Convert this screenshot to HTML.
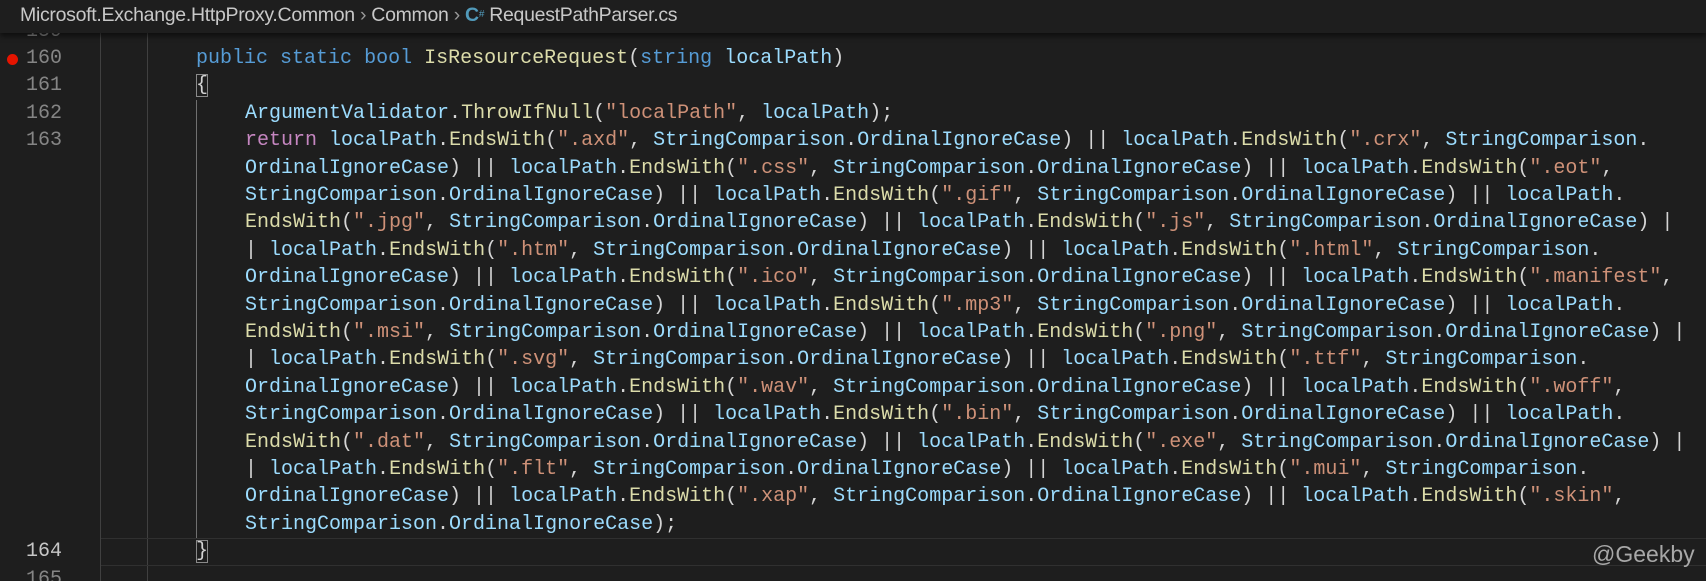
<!DOCTYPE html>
<html><head><meta charset="utf-8"><style>
html,body{margin:0;padding:0;background:#1e1e1e;width:1706px;height:581px;overflow:hidden;position:relative}
.row{position:absolute;left:0;width:1706px;height:27.4px;line-height:27.4px;font-family:"Liberation Mono",monospace;font-size:20px;white-space:pre;color:#d4d4d4}
.ln{position:absolute;left:0;width:62px;text-align:right;color:#858585}
.code{position:absolute}
.v{color:#9cdcfe}.f{color:#dcdcaa}.s{color:#ce9178}.k{color:#569cd6}.r{color:#c586c0}
.g{position:absolute;width:1px;background:#404040}
.bc{position:absolute;left:0;top:0;width:1706px;height:33px;background:#1e1e1e;box-shadow:0 3px 5px rgba(0,0,0,.55);font-family:"Liberation Sans",sans-serif;font-size:19.5px;letter-spacing:-0.3px;color:#c8c8c8;line-height:30px;z-index:5;white-space:pre}
.br{outline:1px solid #8a8a8a;outline-offset:-1px}
</style></head><body>
<div class="g" style="left:100px;top:33px;height:548px"></div>
<div class="g" style="left:147px;top:33px;height:548px"></div>
<div class="g" style="left:196px;top:100px;height:438px;background:#707070"></div>
<div style="position:absolute;left:101px;top:538px;width:1605px;height:26px;border-top:1px solid #303030;border-bottom:1px solid #303030"></div>
<div style="position:absolute;left:7px;top:54px;width:11px;height:11px;border-radius:50%;background:#e51400"></div>

<div class="row" style="top:17.6px"><span class="ln">159</span></div>
<div class="row" style="top:45px"><span class="ln">160</span><span class="code" style="left:196px"><span class="k">public</span> <span class="k">static</span> <span class="k">bool</span> <span class="f">IsResourceRequest</span>(<span class="k">string</span> <span class="v">localPath</span>)</span></div>
<div class="row" style="top:72.4px"><span class="ln">161</span><span class="code" style="left:196px"><span class="br">{</span></span></div>
<div class="row" style="top:99.8px"><span class="ln">162</span><span class="code" style="left:245px"><span class="v">ArgumentValidator</span>.<span class="f">ThrowIfNull</span>(<span class="s">"localPath"</span>, <span class="v">localPath</span>);</span></div>
<div class="row" style="top:127.2px"><span class="ln">163</span><span class="code" style="left:245px"><span class="r">return</span> <span class="v">localPath</span>.<span class="f">EndsWith</span>(<span class="s">".axd"</span>, <span class="v">StringComparison</span>.<span class="v">OrdinalIgnoreCase</span>) || <span class="v">localPath</span>.<span class="f">EndsWith</span>(<span class="s">".crx"</span>, <span class="v">StringComparison</span>.</span></div>
<div class="row" style="top:154.6px"><span class="code" style="left:245px"><span class="v">OrdinalIgnoreCase</span>) || <span class="v">localPath</span>.<span class="f">EndsWith</span>(<span class="s">".css"</span>, <span class="v">StringComparison</span>.<span class="v">OrdinalIgnoreCase</span>) || <span class="v">localPath</span>.<span class="f">EndsWith</span>(<span class="s">".eot"</span>,</span></div>
<div class="row" style="top:182px"><span class="code" style="left:245px"><span class="v">StringComparison</span>.<span class="v">OrdinalIgnoreCase</span>) || <span class="v">localPath</span>.<span class="f">EndsWith</span>(<span class="s">".gif"</span>, <span class="v">StringComparison</span>.<span class="v">OrdinalIgnoreCase</span>) || <span class="v">localPath</span>.</span></div>
<div class="row" style="top:209.4px"><span class="code" style="left:245px"><span class="f">EndsWith</span>(<span class="s">".jpg"</span>, <span class="v">StringComparison</span>.<span class="v">OrdinalIgnoreCase</span>) || <span class="v">localPath</span>.<span class="f">EndsWith</span>(<span class="s">".js"</span>, <span class="v">StringComparison</span>.<span class="v">OrdinalIgnoreCase</span>) |</span></div>
<div class="row" style="top:236.8px"><span class="code" style="left:245px">| <span class="v">localPath</span>.<span class="f">EndsWith</span>(<span class="s">".htm"</span>, <span class="v">StringComparison</span>.<span class="v">OrdinalIgnoreCase</span>) || <span class="v">localPath</span>.<span class="f">EndsWith</span>(<span class="s">".html"</span>, <span class="v">StringComparison</span>.</span></div>
<div class="row" style="top:264.2px"><span class="code" style="left:245px"><span class="v">OrdinalIgnoreCase</span>) || <span class="v">localPath</span>.<span class="f">EndsWith</span>(<span class="s">".ico"</span>, <span class="v">StringComparison</span>.<span class="v">OrdinalIgnoreCase</span>) || <span class="v">localPath</span>.<span class="f">EndsWith</span>(<span class="s">".manifest"</span>,</span></div>
<div class="row" style="top:291.6px"><span class="code" style="left:245px"><span class="v">StringComparison</span>.<span class="v">OrdinalIgnoreCase</span>) || <span class="v">localPath</span>.<span class="f">EndsWith</span>(<span class="s">".mp3"</span>, <span class="v">StringComparison</span>.<span class="v">OrdinalIgnoreCase</span>) || <span class="v">localPath</span>.</span></div>
<div class="row" style="top:319px"><span class="code" style="left:245px"><span class="f">EndsWith</span>(<span class="s">".msi"</span>, <span class="v">StringComparison</span>.<span class="v">OrdinalIgnoreCase</span>) || <span class="v">localPath</span>.<span class="f">EndsWith</span>(<span class="s">".png"</span>, <span class="v">StringComparison</span>.<span class="v">OrdinalIgnoreCase</span>) |</span></div>
<div class="row" style="top:346.4px"><span class="code" style="left:245px">| <span class="v">localPath</span>.<span class="f">EndsWith</span>(<span class="s">".svg"</span>, <span class="v">StringComparison</span>.<span class="v">OrdinalIgnoreCase</span>) || <span class="v">localPath</span>.<span class="f">EndsWith</span>(<span class="s">".ttf"</span>, <span class="v">StringComparison</span>.</span></div>
<div class="row" style="top:373.8px"><span class="code" style="left:245px"><span class="v">OrdinalIgnoreCase</span>) || <span class="v">localPath</span>.<span class="f">EndsWith</span>(<span class="s">".wav"</span>, <span class="v">StringComparison</span>.<span class="v">OrdinalIgnoreCase</span>) || <span class="v">localPath</span>.<span class="f">EndsWith</span>(<span class="s">".woff"</span>,</span></div>
<div class="row" style="top:401.2px"><span class="code" style="left:245px"><span class="v">StringComparison</span>.<span class="v">OrdinalIgnoreCase</span>) || <span class="v">localPath</span>.<span class="f">EndsWith</span>(<span class="s">".bin"</span>, <span class="v">StringComparison</span>.<span class="v">OrdinalIgnoreCase</span>) || <span class="v">localPath</span>.</span></div>
<div class="row" style="top:428.6px"><span class="code" style="left:245px"><span class="f">EndsWith</span>(<span class="s">".dat"</span>, <span class="v">StringComparison</span>.<span class="v">OrdinalIgnoreCase</span>) || <span class="v">localPath</span>.<span class="f">EndsWith</span>(<span class="s">".exe"</span>, <span class="v">StringComparison</span>.<span class="v">OrdinalIgnoreCase</span>) |</span></div>
<div class="row" style="top:456px"><span class="code" style="left:245px">| <span class="v">localPath</span>.<span class="f">EndsWith</span>(<span class="s">".flt"</span>, <span class="v">StringComparison</span>.<span class="v">OrdinalIgnoreCase</span>) || <span class="v">localPath</span>.<span class="f">EndsWith</span>(<span class="s">".mui"</span>, <span class="v">StringComparison</span>.</span></div>
<div class="row" style="top:483.4px"><span class="code" style="left:245px"><span class="v">OrdinalIgnoreCase</span>) || <span class="v">localPath</span>.<span class="f">EndsWith</span>(<span class="s">".xap"</span>, <span class="v">StringComparison</span>.<span class="v">OrdinalIgnoreCase</span>) || <span class="v">localPath</span>.<span class="f">EndsWith</span>(<span class="s">".skin"</span>,</span></div>
<div class="row" style="top:510.8px"><span class="code" style="left:245px"><span class="v">StringComparison</span>.<span class="v">OrdinalIgnoreCase</span>);</span></div>
<div class="row" style="top:538.2px"><span class="ln" style="color:#c6c6c6">164</span><span class="code" style="left:196px"><span class="br">}</span></span></div>
<div class="row" style="top:565.6px"><span class="ln">165</span></div>

<div class="bc"><span style="position:absolute;left:20px">Microsoft.Exchange.HttpProxy.Common <span style="color:#999">›</span> Common <span style="color:#999">›</span> <span style="color:#519aba;font-weight:bold">C</span><span style="color:#519aba;font-size:10px;vertical-align:top">#</span> RequestPathParser.cs</span></div>

<div style="position:absolute;left:1592px;top:541px;font-family:'Liberation Sans',sans-serif;font-size:23px;color:#a8a8a8">@Geekby</div>
</body></html>
